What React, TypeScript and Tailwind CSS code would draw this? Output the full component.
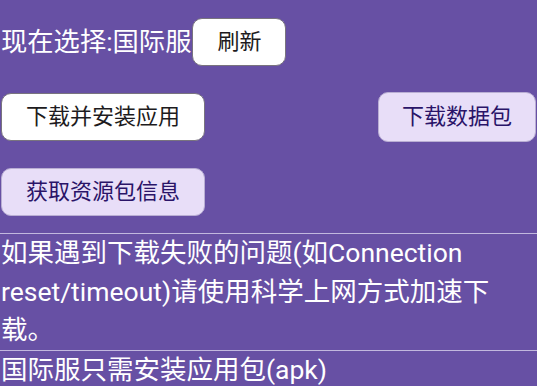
import React from "react";

const font = "font-[Roboto,'Noto_Sans_CJK_SC',sans-serif]";

function OutlinedButton({ children }: { children: React.ReactNode }) {
  return (
    <button className="h-12 shrink-0 rounded-[10px] border border-[#79747e] bg-white px-[24px] text-[22px] leading-none text-[#1d1b20]">
      {children}
    </button>
  );
}

function TonalButton({ children }: { children: React.ReactNode }) {
  return (
    <button className="h-[50px] shrink-0 rounded-[10px] border border-[#b9aed3] bg-[#e8def8] px-[23px] text-[22px] leading-none text-[#2a1468]">
      {children}
    </button>
  );
}

export default function App() {
  return (
    <div className={`${font} h-[386px] w-[537px] overflow-hidden bg-[#6750a4] text-white`}>
      <div className="flex flex-col px-px pt-[18px]">
        <div className="flex h-12 items-center">
          <span className="text-[26.3px] leading-[38.5px]">现在选择:国际服</span>
          <div className="ml-px">
            <OutlinedButton>刷新</OutlinedButton>
          </div>
        </div>
        <div className="mt-[26px] flex items-center justify-between">
          <OutlinedButton>下载并安装应用</OutlinedButton>
          <TonalButton>下载数据包</TonalButton>
        </div>
        <div className="mt-[26px] flex">
          <OutlinedButtonTonal />
        </div>
      </div>
      <div className="mt-[17px] h-px w-full bg-[#c2b8de]" />
      <p className="px-px text-[26.5px] leading-[38.5px]">
        如果遇到下载失败的问题(如Connection reset/timeout)请使用科学上网方式加速下载。
      </p>
      <div className="h-px w-full bg-[#c2b8de]" />
      <p className="px-px text-[26.5px] leading-[38.5px]">国际服只需安装应用包(apk)</p>
    </div>
  );
}

function OutlinedButtonTonal() {
  return (
    <button className="h-12 shrink-0 rounded-[10px] border border-[#b9aed3] bg-[#e8def8] px-[24px] text-[22px] leading-none text-[#2a1468]">
      获取资源包信息
    </button>
  );
}
